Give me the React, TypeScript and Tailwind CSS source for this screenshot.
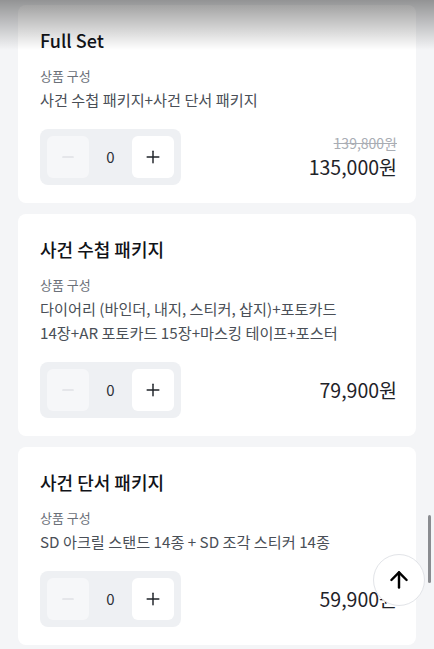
import { ArrowUp, Minus, Plus } from "lucide-react";

type Product = {
  title: string;
  lines: string[];
  price: string;
  originalPrice?: string;
};

const products: Product[] = [
  {
    title: "Full Set",
    lines: ["사건 수첩 패키지+사건 단서 패키지"],
    originalPrice: "139,800원",
    price: "135,000원",
  },
  {
    title: "사건 수첩 패키지",
    lines: [
      "다이어리 (바인더, 내지, 스티커, 삽지)+포토카드",
      "14장+AR 포토카드 15장+마스킹 테이프+포스터",
    ],
    price: "79,900원",
  },
  {
    title: "사건 단서 패키지",
    lines: ["SD 아크릴 스탠드 14종 + SD 조각 스티커 14종"],
    price: "59,900원",
  },
];

const Stepper = () => (
  <div className="flex items-center rounded-lg bg-[#eef0f3] p-[7px]">
    <button className="flex h-[42px] w-[42px] items-center justify-center rounded-md bg-[#f6f7f9] text-[#d3d6db]">
      <Minus size={18} strokeWidth={1.5} />
    </button>
    <span className="w-[43px] text-center text-[15px] text-[#2b2f36]">0</span>
    <button className="flex h-[42px] w-[42px] items-center justify-center rounded-md bg-white text-[#1f2329]">
      <Plus size={20} strokeWidth={1.75} />
    </button>
  </div>
);

const ProductCard = ({ product }: { product: Product }) => (
  <div className="rounded-lg bg-white pb-[18px] pl-[22px] pr-[19px] pt-[22px]">
    <h3 className="text-[18px] font-medium leading-[26px] text-[#111318]">
      {product.title}
    </h3>
    <p className="mt-[14px] text-[13px] leading-[18px] text-[#6b7079]">상품 구성</p>
    <div className="mt-[2px] text-[15.2px] leading-[24px] text-[#4a4f57]">
      {product.lines.map((line, i) => (
        <p key={i} className="h-[24px] whitespace-nowrap">
          {line}
        </p>
      ))}
    </div>
    <div className="mt-[18px] flex items-center justify-between">
      <Stepper />
      <div className="flex flex-col items-end">
        {product.originalPrice && (
          <span className="mb-[2px] text-[14px] leading-[17px] text-[#a9adb4] line-through">
            {product.originalPrice}
          </span>
        )}
        <span className="text-[19.5px] font-normal leading-[26px] text-[#1f2329]">
          {product.price}
        </span>
      </div>
    </div>
  </div>
);

export default function App() {
  return (
    <div
      className="relative h-[649px] w-[434px] overflow-hidden bg-[#f4f5f7]"
      style={{ fontFamily: '"Noto Sans CJK KR", "Noto Sans", sans-serif' }}
    >
      <div className="flex flex-col gap-[11px] px-[18px] pt-[5px]">
        {products.map((p) => (
          <ProductCard key={p.title} product={p} />
        ))}
      </div>

      {/* top fade */}
      <div className="pointer-events-none absolute inset-x-0 top-0 h-[50px] bg-linear-to-b from-black/40 to-transparent" />

      {/* scrollbar */}
      <div className="absolute right-[3px] top-[515px] h-[68px] w-[3px] rounded-full bg-[#8a8c90]" />

      {/* scroll to top */}
      <button className="absolute left-[373px] top-[554px] flex h-[52px] w-[52px] items-center justify-center rounded-full border border-[#e2e4e8] bg-white text-black">
        <ArrowUp size={26} strokeWidth={2.25} />
      </button>
    </div>
  );
}
